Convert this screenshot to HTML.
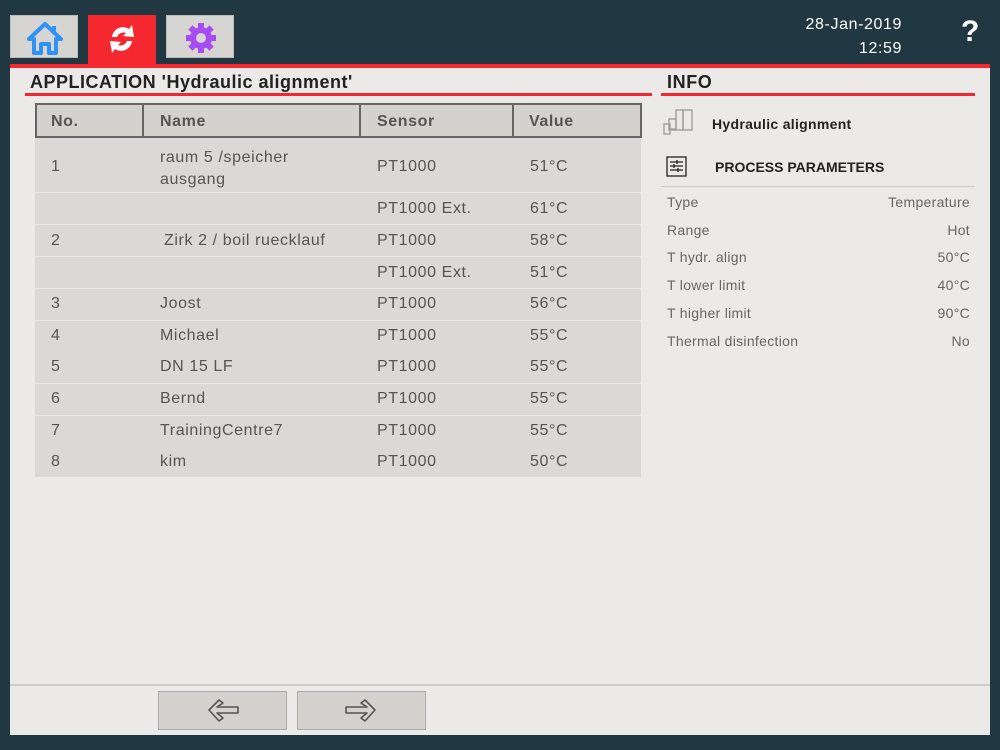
<!DOCTYPE html>
<html><head><style>
*{margin:0;padding:0;box-sizing:border-box}
body{width:1000px;height:750px;background:#213742;position:relative;overflow:hidden;font-family:"Liberation Sans",sans-serif;color:#555}
.abs{position:absolute}
.tab{position:absolute;top:15px;width:68px;height:43px;background:#d6d5d1;border:1px solid #bdbcb8}
.panel{left:10px;top:64px;width:980px;height:671px;background:#ebeae8;border-top:4px solid #f5282f}
.t{position:absolute;font-size:16px;white-space:nowrap;letter-spacing:0.6px}
.row{position:absolute;left:35px;width:606px;height:31px;background:#dad9d7}
.p{position:absolute;font-size:14px;color:#666;letter-spacing:0.3px}
</style></head><body>
<div class="tab" style="left:10px"><svg width="68" height="43" viewBox="0 0 68 43"><path d="M34 8 L18 23 H23 V37 H30 V28 H38 V37 H45 V23 H50 Z" fill="none" stroke="#2e93f5" stroke-width="4" stroke-linejoin="round"/><rect x="41" y="10" width="4" height="8" fill="#2e93f5"/></svg></div>
<div class="abs" style="left:88px;top:15px;width:68px;height:50px;background:#f5282f"><svg width="68" height="50" viewBox="0 0 68 50"><path d="M24 22 A11 11 0 0 1 41 14 L44 10 L46 22 L35 21 L38 18 A7 7 0 0 0 29 22 Z" fill="#fff"/><path d="M44 26 A11 11 0 0 1 27 34 L24 38 L22 26 L33 27 L30 30 A7 7 0 0 0 39 26 Z" fill="#fff"/></svg></div>
<div class="tab" style="left:166px"><svg width="68" height="43" viewBox="0 0 68 43"><g fill="#a64cf2" transform="translate(34,22)"><circle r="11"/><g id="g"><rect x="-3" y="-15" width="6" height="30"/><rect x="-15" y="-3" width="30" height="6"/></g><use href="#g" transform="rotate(45)"/></g><circle cx="34" cy="22" r="5" fill="#d6d5d1"/></svg></div>
<div class="t" style="right:98px;top:16px;color:#fff">28-Jan-2019</div>
<div class="t" style="right:98px;top:40px;color:#fff">12:59</div>
<div class="t" style="left:961px;top:15px;color:#fff;font-size:30px;font-weight:bold">?</div>
<div class="abs panel"></div>
<div class="t" style="left:30px;top:72px;font-weight:bold;font-size:18px;color:#222;letter-spacing:0.5px">APPLICATION 'Hydraulic alignment'</div>
<div class="abs" style="left:25px;top:93px;width:627px;height:3px;background:#f5282f"></div>
<div class="t" style="left:667px;top:72px;font-weight:bold;font-size:18px;color:#222">INFO</div>
<div class="abs" style="left:661px;top:93px;width:314px;height:3px;background:#f5282f"></div>
<div class="abs" style="left:35px;top:103px;width:607px;height:35px;background:#d3d2ce;border:2px solid #666"></div>
<div class="abs" style="left:142px;top:103px;width:2px;height:35px;background:#666"></div>
<div class="abs" style="left:359px;top:103px;width:2px;height:35px;background:#666"></div>
<div class="abs" style="left:512px;top:103px;width:2px;height:35px;background:#666"></div>
<div class="t" style="left:51px;top:113px;font-weight:bold">No.</div>
<div class="t" style="left:160px;top:113px;font-weight:bold">Name</div>
<div class="t" style="left:377px;top:113px;font-weight:bold">Sensor</div>
<div class="t" style="left:529px;top:113px;font-weight:bold">Value</div>
<div class="row" style="top:138px;height:54px"></div>
<div class="t" style="left:51px;top:158px">1</div>
<div class="t" style="left:160px;top:147px;line-height:22px">raum 5 /speicher<br>ausgang</div>
<div class="t" style="left:377px;top:158px">PT1000</div><div class="t" style="left:530px;top:158px">51°C</div>
<div class="row" style="top:193px"></div>
<div class="t" style="left:377px;top:200px">PT1000 Ext.</div><div class="t" style="left:530px;top:200px">61°C</div>
<div class="row" style="top:225px"></div>
<div class="t" style="left:51px;top:232px">2</div><div class="t" style="left:164px;top:232px">Zirk 2 / boil ruecklauf</div>
<div class="t" style="left:377px;top:232px">PT1000</div><div class="t" style="left:530px;top:232px">58°C</div>
<div class="row" style="top:257px"></div>
<div class="t" style="left:377px;top:264px">PT1000 Ext.</div><div class="t" style="left:530px;top:264px">51°C</div>
<div class="row" style="top:289px"></div>
<div class="t" style="left:51px;top:295px">3</div><div class="t" style="left:160px;top:295px">Joost</div><div class="t" style="left:377px;top:295px">PT1000</div><div class="t" style="left:530px;top:295px">56°C</div>
<div class="row" style="top:321px"></div>
<div class="t" style="left:51px;top:327px">4</div><div class="t" style="left:160px;top:327px">Michael</div><div class="t" style="left:377px;top:327px">PT1000</div><div class="t" style="left:530px;top:327px">55°C</div>
<div class="row" style="top:352px"></div>
<div class="t" style="left:51px;top:358px">5</div><div class="t" style="left:160px;top:358px">DN 15 LF</div><div class="t" style="left:377px;top:358px">PT1000</div><div class="t" style="left:530px;top:358px">55°C</div>
<div class="row" style="top:384px"></div>
<div class="t" style="left:51px;top:390px">6</div><div class="t" style="left:160px;top:390px">Bernd</div><div class="t" style="left:377px;top:390px">PT1000</div><div class="t" style="left:530px;top:390px">55°C</div>
<div class="row" style="top:416px"></div>
<div class="t" style="left:51px;top:422px">7</div><div class="t" style="left:160px;top:422px">TrainingCentre7</div><div class="t" style="left:377px;top:422px">PT1000</div><div class="t" style="left:530px;top:422px">55°C</div>
<div class="row" style="top:447px;height:30px"></div>
<div class="t" style="left:51px;top:453px">8</div><div class="t" style="left:160px;top:453px">kim</div><div class="t" style="left:377px;top:453px">PT1000</div><div class="t" style="left:530px;top:453px">50°C</div>

<svg class="abs" style="left:663px;top:109px" width="32" height="28" viewBox="0 0 32 28" fill="none" stroke="#999" stroke-width="1.3"><rect x="13" y="1" width="7" height="20"/><rect x="20" y="1" width="9" height="20"/><rect x="6" y="10" width="7" height="11"/><rect x="1" y="15" width="6" height="10"/><path d="M7 20h5"/></svg>
<div class="t" style="left:712px;top:116px;font-weight:bold;font-size:14px;color:#222;letter-spacing:0.3px">Hydraulic alignment</div>
<svg class="abs" style="left:666px;top:156px" width="21" height="21" viewBox="0 0 21 21" fill="none" stroke="#222" stroke-width="1.3"><rect x="1" y="1" width="19" height="19"/><path d="M4 6h13M4 10h13M4 14h13M11 4v4M8 8v4M12 12v4"/></svg>
<div class="t" style="left:715px;top:159px;font-weight:bold;font-size:14px;color:#222;letter-spacing:0">PROCESS PARAMETERS</div>
<div class="abs" style="left:661px;top:186px;width:314px;height:1px;background:#ccc"></div>
<div class="p" style="left:667px;top:194px">Type</div><div class="p" style="right:30px;top:194px">Temperature</div>
<div class="p" style="left:667px;top:222px">Range</div><div class="p" style="right:30px;top:222px">Hot</div>
<div class="p" style="left:667px;top:249px">T hydr. align</div><div class="p" style="right:30px;top:249px">50°C</div>
<div class="p" style="left:667px;top:277px">T lower limit</div><div class="p" style="right:30px;top:277px">40°C</div>
<div class="p" style="left:667px;top:305px">T higher limit</div><div class="p" style="right:30px;top:305px">90°C</div>
<div class="p" style="left:667px;top:333px">Thermal disinfection</div><div class="p" style="right:30px;top:333px">No</div>

<div class="abs" style="left:10px;top:684px;width:980px;height:2px;background:#ccc"></div>
<div class="abs" style="left:158px;top:691px;width:129px;height:39px;background:#d3d2ce;border:1px solid #aaa"></div>
<div class="abs" style="left:297px;top:691px;width:129px;height:39px;background:#d3d2ce;border:1px solid #aaa"></div>
<svg class="abs" style="left:205px;top:697px" width="36" height="28" viewBox="0 0 36 28"><path d="M14 3 L4 13 L14 24 L18 21 L12 16 H33 V10 H12 L18 6 Z" fill="none" stroke="#555" stroke-width="1.6" stroke-linejoin="round"/></svg>
<svg class="abs" style="left:343px;top:697px" width="36" height="28" viewBox="0 0 36 28"><path d="M22 3 L32 13 L22 24 L18 21 L24 16 H3 V10 H24 L18 6 Z" fill="none" stroke="#555" stroke-width="1.6" stroke-linejoin="round"/></svg>
</body></html>
